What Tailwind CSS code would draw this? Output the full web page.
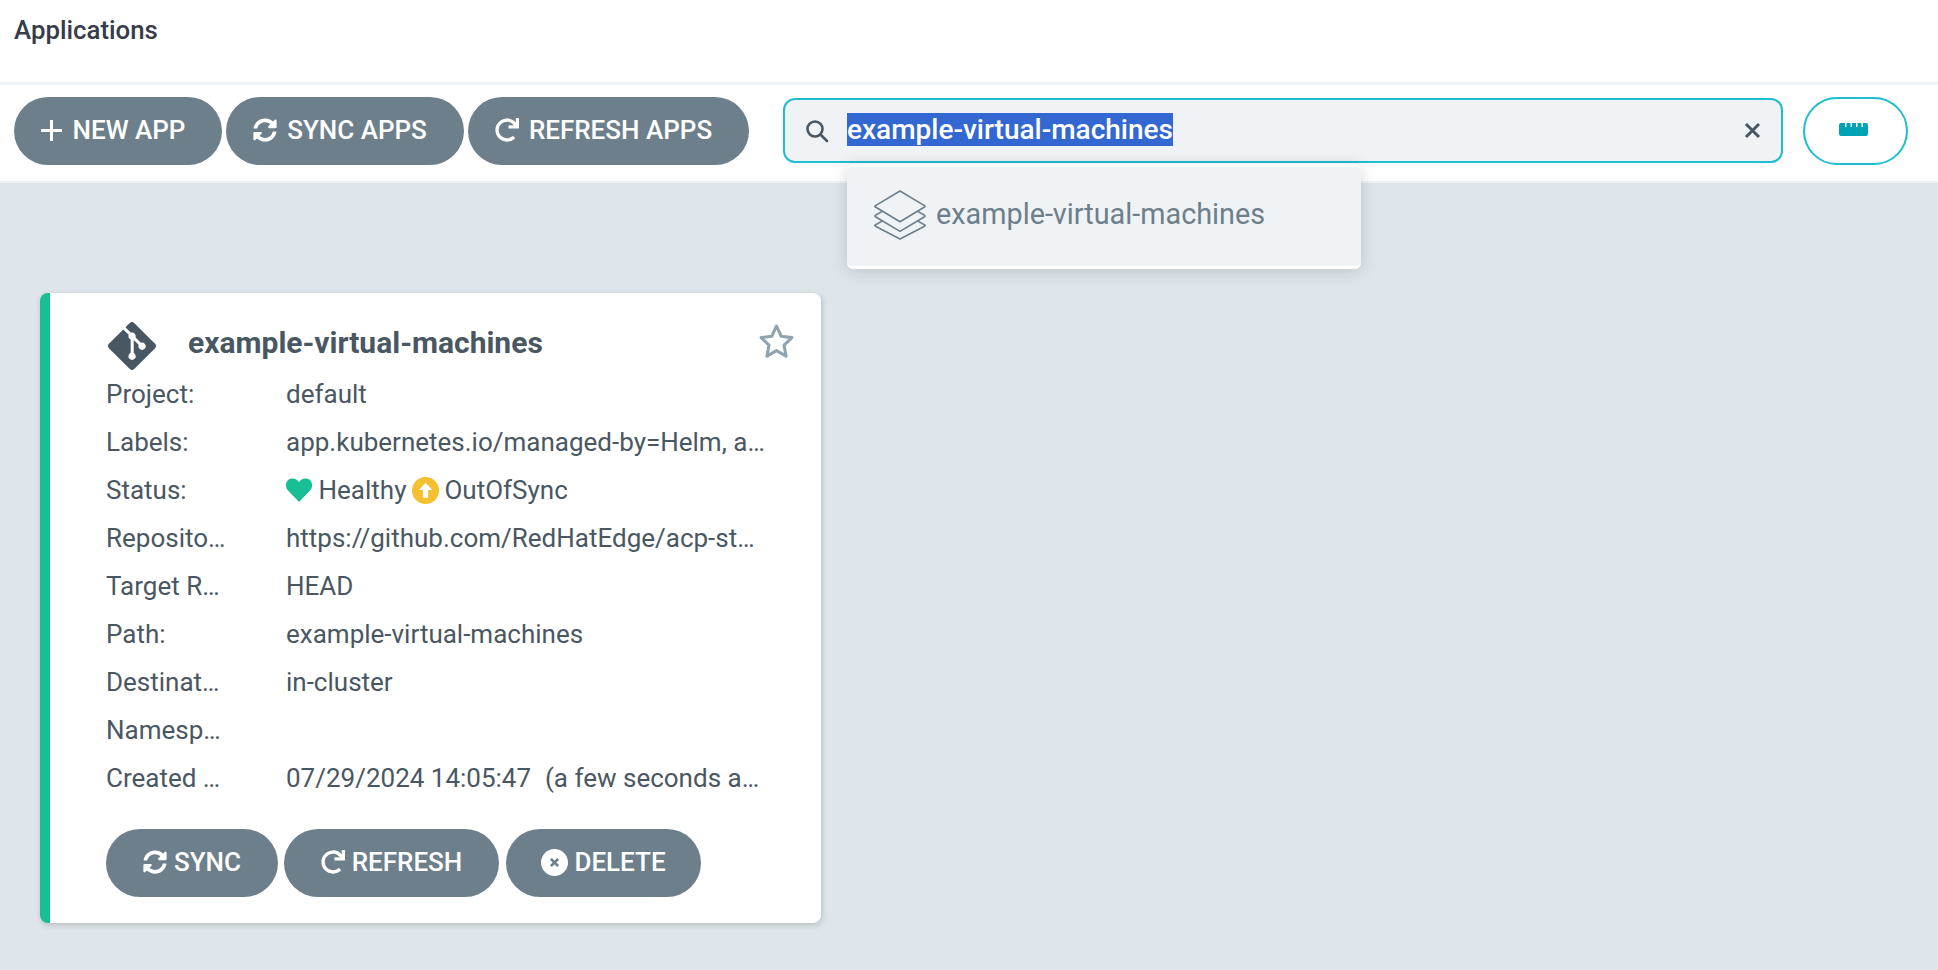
<!DOCTYPE html>
<html lang="en">
<head>
    <meta charset="UTF-8">
    <title>Applications</title>
    <script src="https://cdn.jsdelivr.net/npm/@tailwindcss/browser@4"></script>
</head>
<body class="bg-[#dee6eb] min-h-screen overflow-hidden font-['Roboto',sans-serif]">
    <!-- Title bar -->
    <div class="h-[82px] bg-white pl-[14px] pt-[14px] text-[25.8px] leading-[32px] font-medium text-[#363c4a]">Applications</div>
    <div class="h-[3px] bg-[#eff3f5]"></div>

    <!-- Toolbar -->
    <div class="relative h-[98px] bg-white border-b-2 border-[#eff3f5] pl-[14px] pt-[12px] flex items-start">
        <div class="flex gap-[4px]">
            <button class="h-[68px] w-[208px] rounded-[34px] bg-[#6d7f8b] text-white text-[26px] font-medium flex items-center justify-center gap-[11px] pr-[10px] pb-[2px]">
                <svg class="w-[21px] h-[21px]" viewBox="0 0 21 21" fill="none" stroke="white" stroke-width="3"><path d="M10.500 0v21M0 10.500h21"/></svg>
                NEW APP
            </button>
            <button class="h-[68px] w-[238px] rounded-[34px] bg-[#6d7f8b] text-white text-[26px] font-medium flex items-center justify-center gap-[10px] pr-[10px] pb-[2px]">
                <svg class="w-[24px] h-[24px]" viewBox="0 0 512 512" fill="white"><path d="M370.72 133.28C339.458 104.008 298.888 87.962 255.848 88c-77.458.068-144.328 53.178-162.791 126.85-1.344 5.363-6.122 9.15-11.651 9.15H24.103c-7.498 0-13.194-6.807-11.807-14.176C33.933 94.924 134.813 8 256 8c66.448 0 126.791 26.136 171.315 68.685L463.03 40.97C478.149 25.851 504 36.559 504 57.941V192c0 13.255-10.745 24-24 24H345.941c-21.382 0-32.09-25.851-16.971-40.971l41.75-41.749zM32 296h134.059c21.382 0 32.09 25.851 16.971 40.971l-41.75 41.75c31.262 29.273 71.835 45.319 114.876 45.28 77.418-.07 144.315-53.144 162.787-126.849 1.344-5.363 6.122-9.15 11.651-9.15h57.304c7.498 0 13.194 6.807 11.807 14.176C478.067 417.076 377.187 504 256 504c-66.448 0-126.791-26.136-171.315-68.685L48.97 471.03C33.851 486.149 8 475.441 8 454.059V320c0-13.255 10.745-24 24-24z"/></svg>
                SYNC APPS
            </button>
            <button class="h-[68px] w-[281px] rounded-[34px] bg-[#6d7f8b] text-white text-[26px] font-medium flex items-center justify-center gap-[10px] pr-[10px] pb-[2px]">
                <svg class="w-[24px] h-[24px]" viewBox="0 0 512 512" fill="white"><path d="M500.33 0h-47.41a12 12 0 0 0-12 12.57l4 82.76A247.42 247.42 0 0 0 256 8C119.34 8 8.9 119.53 8 256.19 7.1 393.07 118.3 504 256 504a247.1 247.1 0 0 0 166.18-63.91 12 12 0 0 0 .48-17.43l-34-34a12 12 0 0 0-16.38-.55A176 176 0 1 1 402.1 157.8l-101.53-4.87a12 12 0 0 0-12.57 12v47.41a12 12 0 0 0 12 12h200.33a12 12 0 0 0 12-12V12a12 12 0 0 0-12-12z"/></svg>
                REFRESH APPS
            </button>
        </div>

        <!-- Search -->
        <div class="ml-[34px] mt-[1px] h-[65px] w-[1000px] rounded-[12px] border-2 border-[#1fbdd0] bg-[#eff3f5] flex items-center pl-[20px] pr-[20px]">
            <svg class="w-[24px] h-[24px] shrink-0" viewBox="0 0 24 24" fill="none" stroke="#495763" stroke-width="2.6" stroke-linecap="round"><circle cx="10" cy="10" r="7.500"/><path d="M15.500 15.500L22 22"/></svg>
            <div class="ml-[18px] flex-1 text-[28px] leading-[32px] font-medium pb-[2px]"><span class="bg-[#3367d1] text-white">example-virtual-machines</span></div>
            <svg class="w-[17px] h-[17px] shrink-0 mb-[1px]" viewBox="0 0 17 17" fill="none" stroke="#495763" stroke-width="3"><path d="M2 2l13 13M15 2L2 15"/></svg>
        </div>

        <!-- Display toggle -->
        <button class="ml-[20px] h-[68px] w-[105px] rounded-[34px] border-2 border-[#1fbdd0] bg-white flex items-center justify-center pb-[3px]">
            <svg class="w-[33px] h-[13px]" viewBox="0 0 33 13"><path d="M2 0h4v4h1.500V0h4v4h1.500V0h4v4h1.500V0h4v4h1.500V0h3a2 2 0 0 1 2 2v9a2 2 0 0 1-2 2H2a2 2 0 0 1-2-2V2a2 2 0 0 1 2-2z" fill="#00a2b3"/></svg>
        </button>

        <!-- Autocomplete menu -->
        <div class="absolute left-[847px] top-[79px] w-[514px] h-[105px] rounded-[6px] bg-[#eff3f5] border-y-[3px] border-white shadow-[0_2px_16px_rgba(0,0,0,0.16)] flex items-center pl-[27px] pb-[4px] z-10">
            <svg class="w-[52px] h-[52px] shrink-0" viewBox="0 0 54 52" fill="none" stroke="#6d7f8b" stroke-width="1.7" stroke-linejoin="round"><path d="M27 1L52 16a1 1 0 0 1 0 2L27 33 2 18a1 1 0 0 1 0-2z"/><path d="M9 22L2 26a1 1 0 0 0 0 2l25 15 25-15a1 1 0 0 0 0-2l-7-4"/><path d="M9 32L2 36a1 1 0 0 0 0 2l25 13 25-13a1 1 0 0 0 0-2l-7-4"/></svg>
            <span class="ml-[10px] text-[28.8px] text-[#6d7f8b]">example-virtual-machines</span>
        </div>
    </div>

    <!-- Application card -->
    <div class="ml-[40px] mt-[110px] w-[781px] h-[630px] rounded-[8px] bg-white border-l-[10px] border-[#18be94] shadow-[1px_2px_6px_rgba(0,0,0,0.18)] pl-[56px] pt-[28px] text-[#495763] text-[26px]">
        <div class="h-[49px] flex items-center relative">
            <svg class="ml-[2px] w-[48px] h-[48px]" viewBox="0 0 24 24" fill="#495763"><path d="M23.546 10.93L13.067.452c-.604-.603-1.582-.603-2.188 0L8.708 2.627l2.76 2.76c.645-.215 1.379-.07 1.889.441.516.515.658 1.258.438 1.9l2.658 2.66c.645-.223 1.387-.078 1.9.435.721.72.721 1.884 0 2.604-.719.719-1.881.719-2.6 0-.539-.541-.674-1.337-.404-1.996L12.86 8.955v6.525c.176.086.342.203.488.348.713.721.713 1.883 0 2.6-.719.721-1.889.721-2.609 0-.719-.719-.719-1.879 0-2.598.182-.18.387-.316.605-.406V8.835c-.217-.091-.424-.222-.6-.401-.545-.545-.676-1.342-.396-2.009L7.636 3.7.45 10.881c-.6.605-.6 1.584 0 2.189l10.48 10.477c.604.604 1.582.604 2.186 0l10.43-10.43c.605-.603.605-1.582 0-2.187"/></svg>
            <span class="ml-[32px] mb-[7px] text-[30px] font-bold">example-virtual-machines</span>
            <svg class="absolute left-[653px] top-[3px] w-[35px] h-[34px]" viewBox="0 0 34 33" fill="none" stroke="#8fa4b1" stroke-width="3" stroke-linejoin="round"><path d="M17 2l4.600 9.900 10.400 1.300-7.700 7.300 2 10.700-9.300-5.300-9.300 5.300 2-10.700L2 13.200l10.400-1.300z"/></svg>
        </div>

        <div class="w-[660px] grid grid-cols-[180px_480px] auto-rows-[48px] items-center">
            <div class="truncate w-[119.5px]">Project:</div><div class="truncate">default</div>
            <div class="truncate w-[119.5px]">Labels:</div><div class="truncate">app.kubernetes.io/managed-by=Helm, app.kubernetes.io/instance=example</div>
            <div class="truncate w-[119.5px]">Status:</div>
            <div class="flex items-center">
                <svg class="w-[26px] h-[24px]" viewBox="0 0 26 24" fill="#18be94"><path d="M13 24L2 12.500C-1 9-.5 4 2.500 1.800 5.500-.5 10 0 13 4c3-4 7.500-4.500 10.500-2.200 3 2.200 3.500 7.200.5 10.700z"/></svg>
                <span class="ml-[6.5px]">Healthy</span>
                <svg class="ml-[6px] w-[27px] h-[27px]" viewBox="0 0 26 26"><circle cx="13" cy="13" r="13" fill="#f4c030"/><path d="M13 5.500l6.500 7h-4v7.500h-5v-7.500h-4z" fill="white"/></svg>
                <span class="ml-[5px]">OutOfSync</span>
            </div>
            <div class="truncate w-[119.5px]">Repository:</div><div class="truncate">https://github.com/RedHatEdge/acp-standard-services</div>
            <div class="truncate w-[119.5px]">Target Revision:</div><div class="truncate">HEAD</div>
            <div class="truncate w-[119.5px]">Path:</div><div class="truncate">example-virtual-machines</div>
            <div class="truncate w-[119.5px]">Destination:</div><div class="truncate">in-cluster</div>
            <div class="truncate w-[119.5px]">Namespace:</div><div></div>
            <div class="truncate w-[119.5px]">Created At:</div><div class="truncate">07/29/2024 14:05:47&nbsp; <span class="ml-[1px]">(a few seconds ago)</span></div>
        </div>

        <div class="mt-[27px] flex gap-[6px]">
            <button class="h-[68px] w-[172px] rounded-[34px] bg-[#6d7f8b] text-white text-[26px] font-medium flex items-center justify-center gap-[7px] pb-[2px]">
                <svg class="w-[24px] h-[24px]" viewBox="0 0 512 512" fill="white"><path d="M370.72 133.28C339.458 104.008 298.888 87.962 255.848 88c-77.458.068-144.328 53.178-162.791 126.85-1.344 5.363-6.122 9.15-11.651 9.15H24.103c-7.498 0-13.194-6.807-11.807-14.176C33.933 94.924 134.813 8 256 8c66.448 0 126.791 26.136 171.315 68.685L463.03 40.97C478.149 25.851 504 36.559 504 57.941V192c0 13.255-10.745 24-24 24H345.941c-21.382 0-32.09-25.851-16.971-40.971l41.75-41.749zM32 296h134.059c21.382 0 32.09 25.851 16.971 40.971l-41.75 41.75c31.262 29.273 71.835 45.319 114.876 45.28 77.418-.07 144.315-53.144 162.787-126.849 1.344-5.363 6.122-9.15 11.651-9.15h57.304c7.498 0 13.194 6.807 11.807 14.176C478.067 417.076 377.187 504 256 504c-66.448 0-126.791-26.136-171.315-68.685L48.97 471.03C33.851 486.149 8 475.441 8 454.059V320c0-13.255 10.745-24 24-24z"/></svg>
                SYNC
            </button>
            <button class="h-[68px] w-[215px] rounded-[34px] bg-[#6d7f8b] text-white text-[26px] font-medium flex items-center justify-center gap-[7px] pb-[2px]">
                <svg class="w-[24px] h-[24px]" viewBox="0 0 512 512" fill="white"><path d="M500.33 0h-47.41a12 12 0 0 0-12 12.57l4 82.76A247.42 247.42 0 0 0 256 8C119.34 8 8.9 119.53 8 256.19 7.1 393.07 118.3 504 256 504a247.1 247.1 0 0 0 166.18-63.91 12 12 0 0 0 .48-17.43l-34-34a12 12 0 0 0-16.38-.55A176 176 0 1 1 402.1 157.8l-101.53-4.87a12 12 0 0 0-12.57 12v47.41a12 12 0 0 0 12 12h200.33a12 12 0 0 0 12-12V12a12 12 0 0 0-12-12z"/></svg>
                REFRESH
            </button>
            <button class="ml-[1px] h-[68px] w-[195px] rounded-[34px] bg-[#6d7f8b] text-white text-[26px] font-medium flex items-center justify-center gap-[6px] pb-[2px]">
                <svg class="w-[27px] h-[27px]" viewBox="0 0 26 26"><circle cx="13" cy="13" r="13" fill="white"/><path d="M9.500 9.500l7 7M16.500 9.500l-7 7" stroke="#6d7f8b" stroke-width="2.6"/></svg>
                DELETE
            </button>
        </div>
    </div>
</body>
</html>
